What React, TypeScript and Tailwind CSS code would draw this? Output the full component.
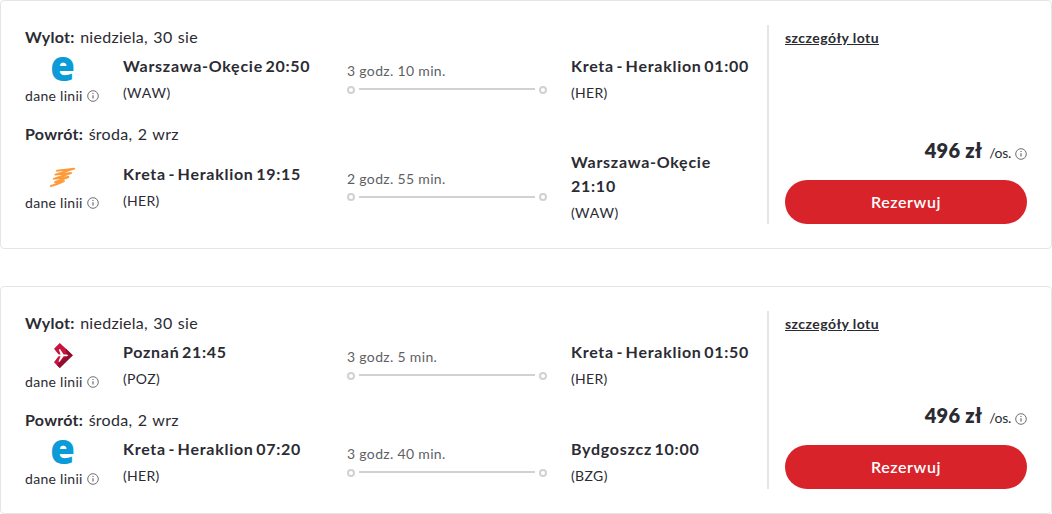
import React from "react";

type Airline = "electra" | "scribble" | "arrow";

type Leg = {
  label: string;
  date: string;
  airline: Airline;
  from: string;
  fromCode: string;
  duration: string;
  to: string;
  toCode: string;
};

const offers: { price: string; legs: Leg[] }[] = [
  {
    price: "496 zł",
    legs: [
      {
        label: "Wylot:",
        date: "niedziela, 30 sie",
        airline: "electra",
        from: "Warszawa-Okęcie 20:50",
        fromCode: "(WAW)",
        duration: "3 godz. 10 min.",
        to: "Kreta - Heraklion 01:00",
        toCode: "(HER)",
      },
      {
        label: "Powrót:",
        date: "środa, 2 wrz",
        airline: "scribble",
        from: "Kreta - Heraklion 19:15",
        fromCode: "(HER)",
        duration: "2 godz. 55 min.",
        to: "Warszawa-Okęcie 21:10",
        toCode: "(WAW)",
      },
    ],
  },
  {
    price: "496 zł",
    legs: [
      {
        label: "Wylot:",
        date: "niedziela, 30 sie",
        airline: "arrow",
        from: "Poznań 21:45",
        fromCode: "(POZ)",
        duration: "3 godz. 5 min.",
        to: "Kreta - Heraklion 01:50",
        toCode: "(HER)",
      },
      {
        label: "Powrót:",
        date: "środa, 2 wrz",
        airline: "electra",
        from: "Kreta - Heraklion 07:20",
        fromCode: "(HER)",
        duration: "3 godz. 40 min.",
        to: "Bydgoszcz 10:00",
        toCode: "(BZG)",
      },
    ],
  },
];

const InfoIcon = ({ className }: { className: string }) => (
  <svg viewBox="0 0 12 12" className={className} fill="none" stroke="#5f5f66">
    <circle cx="6" cy="6" r="5.3" strokeWidth="0.9" />
    <path d="M6 5.2v3.4M6 3v1.1" strokeWidth="1.1" />
  </svg>
);

const AirlineLogo = ({ name }: { name: Airline }) => {
  if (name === "electra") {
    return (
      <svg viewBox="0 0 36 36" className="size-9">
        <text x="0" y="0" transform="translate(18.6 30.4) scale(0.93 1)" textAnchor="middle" fontFamily="Open Sans, sans-serif" fontWeight="800" fontSize="43" fill="#0a9bd8">
          e
        </text>
      </svg>
    );
  }
  if (name === "scribble") {
    return (
      <svg viewBox="0 0 36 36" className="size-9" fill="none" stroke="#fd9a3a" strokeWidth="1.9" strokeLinecap="round" strokeLinejoin="round">
        <path d="M13 11.8L30.2 9.6L11.4 15.6L27 14L9.8 19.8L24.4 18L11 23.2L20 22.2Q14 25.4 6.8 27" />
      </svg>
    );
  }
  return (
    <svg viewBox="0 0 36 36" className="size-9">
      <g transform="translate(1.2 0.3)">
        <path d="M14.6 5.6L27.6 18L14.6 30.6L8.8 25L14 18L8.8 11.4Z" fill="#c8143c" />
        <path d="M20.2 11L27.6 18L14.6 30.6L11.6 27.7L21.5 18Z" fill="#8f0f2e" />
        <path d="M23.2 18.1L21.6 17.2H18.4L14.8 11.8L13.6 12.2L15.4 17.2H12.6L10 15.2V21L12.6 19H15.4L13.2 24.2L14.4 24.4L18.4 19H21.6Z" fill="#fff" />
      </g>
    </svg>
  );
};

const Place = ({ name, code }: { name: string; code: string }) => (
  <div>
    <p className="text-base font-bold leading-6 tracking-[0.73px] [word-spacing:-2.1px]">{name}</p>
    <p className="mt-[7px] text-sm leading-4 tracking-[0.3px] [font-kerning:none]">{code}</p>
  </div>
);

const Dot = () => <span className="size-2 rounded-full border-2 border-[#d1d1d6]" />;

const FlightLeg = ({ leg }: { leg: Leg }) => (
  <div>
    <p className="text-base leading-6 tracking-[0.28px] [word-spacing:1px]">
      <b>{leg.label}</b> {leg.date}
    </p>
    <div className="grid min-h-[57px] grid-cols-[74px_200px_200px_180px] items-center gap-x-6 py-[3.5px]">
      <div className="-my-2 flex flex-col items-center">
        <AirlineLogo name={leg.airline} />
        <div className="flex w-full items-center justify-between pt-[0.6px] pb-[0.4px] text-sm leading-4">
          <span className="tracking-[0.3px]">dane linii</span>
          <InfoIcon className="size-3" />
        </div>
      </div>
      <Place name={leg.from} code={leg.fromCode} />
      <div>
        <p className="py-[0.5px] text-sm leading-[17px] tracking-[0.33px] text-[#5f5f66]">{leg.duration}</p>
        <div className="mt-1.5 flex items-center gap-1">
          <Dot />
          <span className="mb-px h-0.5 flex-1 bg-[#d1d1d6]" />
          <Dot />
        </div>
      </div>
      <Place name={leg.to} code={leg.toCode} />
    </div>
  </div>
);

const App = () => {
  return (
    <main className="flex flex-col gap-[37px] bg-white font-['Lato',sans-serif] text-[#2b2b33]">
      {offers.map((offer, i) => (
        <section key={i} className="flex rounded border border-[#e5e5e5] p-6">
          <div className="flex w-[742px] flex-col gap-4">
            {offer.legs.map((leg) => (
              <FlightLeg key={leg.label} leg={leg} />
            ))}
          </div>

          <div className="flex flex-1 flex-col justify-between border-l-2 border-[#e5e5e5] pl-4">
            <a href="#" className="self-start text-sm font-bold leading-[26px] tracking-[0.44px] underline">
              szczegóły lotu
            </a>
            <div>
              <div className="mb-4 flex items-baseline justify-end leading-[30px]">
                <span className="text-xl font-extrabold tracking-[0.3px]">{offer.price}</span>
                <span className="ml-[7px] text-sm tracking-[-0.3px]">/os.</span>
                <InfoIcon className="ml-1 size-3 translate-y-0.5" />
              </div>
              <button className="h-11 w-full rounded-full bg-[#d8232a] text-base font-semibold tracking-[0.6px] text-white">
                Rezerwuj
              </button>
            </div>
          </div>
        </section>
      ))}
    </main>
  );
};

export default App;
